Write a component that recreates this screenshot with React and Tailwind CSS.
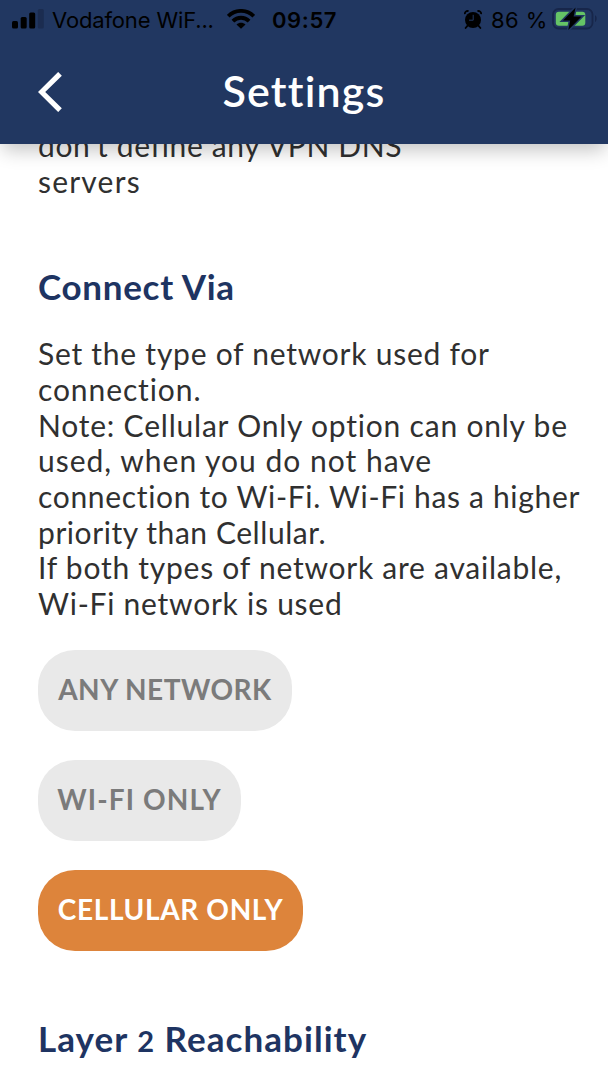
import React from "react";

const DNS_LINES = [
  { text: "don’t define any VPN DNS", tracking: "tracking-[0.64px]" },
  { text: "servers", tracking: "tracking-[1.2px]" },
];

const CONNECT_LINES = [
  { text: "Set the type of network used for", tracking: "tracking-[0.75px]" },
  { text: "connection.", tracking: "tracking-[0.9px]" },
  { text: "Note: Cellular Only option can only be", tracking: "tracking-[0.79px]" },
  { text: "used, when you do not have", tracking: "tracking-[1px]" },
  { text: "connection to Wi-Fi. Wi-Fi has a higher", tracking: "tracking-[0.67px]" },
  { text: "priority than Cellular.", tracking: "tracking-[0.56px]" },
  { text: "If both types of network are available,", tracking: "tracking-[0.75px]" },
  { text: "Wi-Fi network is used", tracking: "tracking-[0.75px]" },
];

const OPTIONS = [
  { label: "ANY NETWORK", width: "w-[254px]", tracking: "tracking-[0.5px]" },
  { label: "WI-FI ONLY", width: "w-[203px]", tracking: "tracking-[1.1px]" },
  { label: "CELLULAR ONLY", width: "w-[265px]", tracking: "tracking-[0.65px]", active: true },
];

function SignalIcon() {
  return (
    <svg className="w-8 h-5 shrink-0" viewBox="0 0 32 20">
      <rect x="0" y="12" width="6" height="7.5" rx="1.5" />
      <rect x="8.7" y="8" width="6" height="11.5" rx="1.5" />
      <rect x="17.2" y="3.5" width="6" height="16" rx="1.5" />
      <rect x="25.8" y="0" width="6" height="19.5" rx="1.5" fill="#1b2c50" />
    </svg>
  );
}

function WifiIcon() {
  return (
    <svg className="w-7 h-5 shrink-0" viewBox="0 0 28 20" fill="none" stroke="#000" strokeWidth="3.8">
      <path d="M1.2 7.2C8.4 .1 19.6 .1 26.8 7.2" />
      <path d="M5.9 12.1C10.4 7.6 17.6 7.6 22.1 12.1" />
      <path d="M14 19.8L9.5 15.6C12 13.2 16 13.2 18.5 15.6Z" fill="#000" stroke="none" />
    </svg>
  );
}

function AlarmIcon() {
  return (
    <svg className="w-[18px] h-[19px] shrink-0" viewBox="0 0 18 19">
      <circle cx="9" cy="10" r="8" />
      <path d="M.9 4.2C.6 2 2.4 .6 4.6 1.1M17.1 4.2C17.4 2 15.6 .6 13.4 1.1" fill="none" stroke="#000" strokeWidth="1.8" />
      <path d="M3.6 15.6L1.6 18M14.4 15.6L16.4 18" stroke="#000" strokeWidth="1.8" strokeLinecap="round" />
      <path d="M9.2 4.8V10.2H5" fill="none" stroke="#213761" strokeWidth="1" />
    </svg>
  );
}

function BatteryIcon() {
  return (
    <svg className="w-[46px] h-6 shrink-0" viewBox="0 0 46 24">
      <rect x="1" y="2" width="39.5" height="19.5" rx="5.5" fill="none" stroke="#17264a" strokeWidth="1.8" />
      <path d="M43 8.3C45.2 9.3 45.2 14 43 15Z" fill="#17264a" />
      <rect x="3.8" y="4.8" width="29.5" height="14" rx="3" fill="#65c466" />
      <path d="M23.6 .5L11 13.4H18.2L16.3 23L29.6 9.6H21.6Z" fill="#000" stroke="#213761" strokeWidth="3" paintOrder="stroke" />
    </svg>
  );
}

function StatusBar() {
  return (
    <div className="flex items-center h-10 pl-3 pr-2.5 font-['Inter',sans-serif] text-[22px] leading-10 text-black whitespace-nowrap">
      <span className="-mt-0.5"><SignalIcon /></span>
      <span className="ml-2 w-[162px] tracking-[-0.15px]">Vodafone WiF...</span>
      <span className="ml-[13px] -mt-0.5"><WifiIcon /></span>
      <span className="ml-[17px] font-semibold tracking-[0.6px]">09:57</span>
      <div className="ml-auto flex items-center">
        <span className="-mt-0.5"><AlarmIcon /></span>
        <span className="ml-[9px] w-[57px] tracking-[0.4px]">86 %</span>
        <span className="ml-1 -mt-0.5"><BatteryIcon /></span>
      </div>
    </div>
  );
}

function Paragraph({ lines }) {
  return (
    <p className="text-[30px] leading-[35.65px] text-[#303030] whitespace-nowrap">
      {lines.map((line) => (
        <span key={line.text} className={`block ${line.tracking}`}>{line.text}</span>
      ))}
    </p>
  );
}

export default function App() {
  return (
    <div className="w-full h-[1079px] flex flex-col overflow-hidden bg-white font-['Lato',sans-serif]">
      <header className="relative z-10 h-36 shrink-0 bg-[#213761] shadow-[0_9px_18px_-3px_rgba(0,0,0,0.24)]">
        <StatusBar />
        <div className="grid grid-cols-[1fr_auto_1fr] items-center h-[104px] px-[38px]">
          <button className="justify-self-start" aria-label="Back">
            <svg className="w-6 h-10" viewBox="0 0 24 40" fill="none" stroke="#fff" strokeWidth="5.2">
              <path d="M22 1.8L3.6 20L22 38.2" />
            </svg>
          </button>
          <h1 className="-mt-0.5 text-[43px] font-semibold text-white tracking-[1.2px]">Settings</h1>
        </div>
      </header>

      <main className="-mt-4 flex flex-col items-start px-[38px]">
        <Paragraph lines={DNS_LINES} />

        <h2 className="mt-[65px] text-[35px] leading-[44px] font-bold text-[#1e3462] tracking-[0.7px] whitespace-nowrap">Connect Via</h2>
        <div className="mt-7">
          <Paragraph lines={CONNECT_LINES} />
        </div>

        <div className="mt-7 flex flex-col gap-[29px]">
          {OPTIONS.map((o) => (
            <button
              key={o.label}
              className={`h-[81px] rounded-[37px] pb-[3px] text-[28px] font-bold whitespace-nowrap ${o.width} ${o.tracking} ${
                o.active ? "bg-[#dd843b] text-white" : "bg-[#e9e9e9] text-[#7b7b7b]"
              }`}
            >
              {o.label}
            </button>
          ))}
        </div>

        <h2 className="mt-[65px] text-[35px] leading-[44px] font-bold text-[#1e3462] tracking-[1.05px] whitespace-nowrap">
          Layer <span className="text-[29px]">2</span> Reachability
        </h2>
      </main>
    </div>
  );
}
